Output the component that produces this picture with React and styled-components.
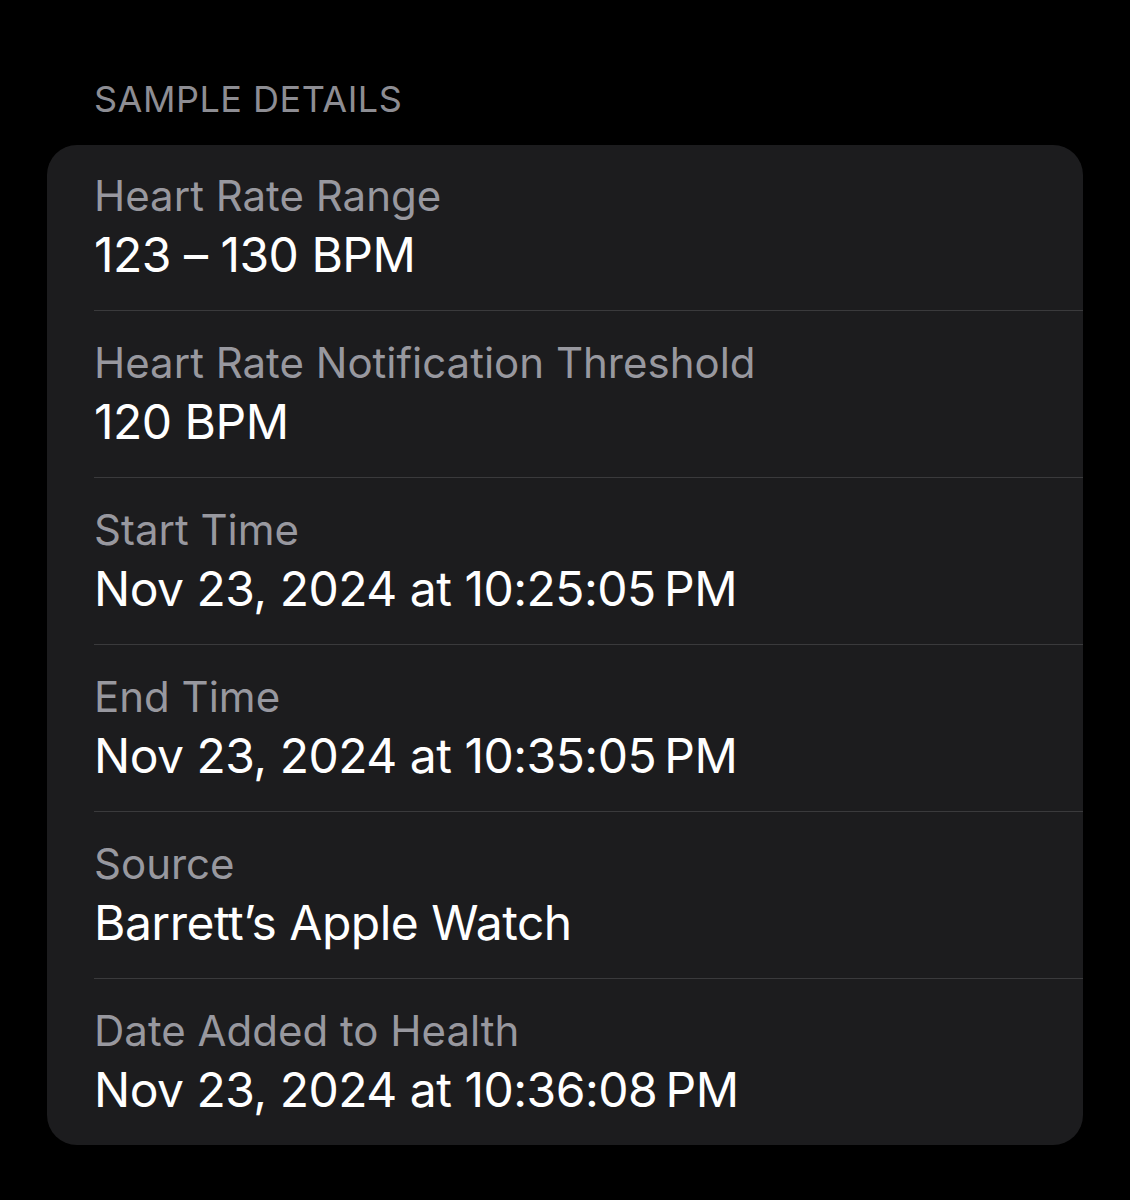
import styled, { createGlobalStyle } from 'styled-components';

const GlobalStyle = createGlobalStyle`
    html, body {
        margin: 0;
        padding: 0;
        background: #000;
    }
    body {
        font-family: Inter, "Noto Sans", "Liberation Sans", sans-serif;
        -webkit-font-smoothing: antialiased;
    }
`

const Page = styled.main`
    width: 1130px;
    min-height: 1200px;
    box-sizing: border-box;
    padding: 77px 47px 0 47px;
    background: #000;
`

const SectionHeader = styled.h3`
    margin: 0 0 24px 47px;
    font-size: 36px;
    font-weight: 400;
    line-height: 44px;
    letter-spacing: 0.5px;
    color: #8d8d93;
`

const Card = styled.section`
    background: #1c1c1e;
    border-radius: 30px;
    overflow: hidden;
`

const Row = styled.div`
    margin-left: 47px;
    padding: ${props => (props.$first ? '26px' : '27px')} 0 26px 0;
    display: flex;
    flex-direction: column;
    gap: 5px;
    border-bottom: ${props => (props.$last ? 'none' : '1px solid #3a3a3c')};
`

const Label = styled.span`
    font-size: 42px;
    line-height: 50px;
    color: #98989f;
`

const Value = styled.span`
    font-size: 48px;
    line-height: 58px;
    color: #fff;
    letter-spacing: -0.5px;
`

const details = [
    { label: 'Heart Rate Range', value: '123 \u2013 130 BPM' },
    { label: 'Heart Rate Notification Threshold', value: '120 BPM' },
    { label: 'Start Time', value: 'Nov 23, 2024 at 10:25:05\u202FPM' },
    { label: 'End Time', value: 'Nov 23, 2024 at 10:35:05\u202FPM' },
    { label: 'Source', value: 'Barrett\u2019s Apple Watch' },
    { label: 'Date Added to Health', value: 'Nov 23, 2024 at 10:36:08\u202FPM' },
];

const App = () => {
    return (
        <>
            <GlobalStyle />
            <Page>
                <SectionHeader>SAMPLE DETAILS</SectionHeader>
                <Card>
                    {details.map((item, i) => (
                        <Row
                            key={item.label}
                            $first={i === 0}
                            $last={i === details.length - 1}
                        >
                            <Label>{item.label}</Label>
                            <Value>{item.value}</Value>
                        </Row>
                    ))}
                </Card>
            </Page>
        </>
    )
}

export default App;
